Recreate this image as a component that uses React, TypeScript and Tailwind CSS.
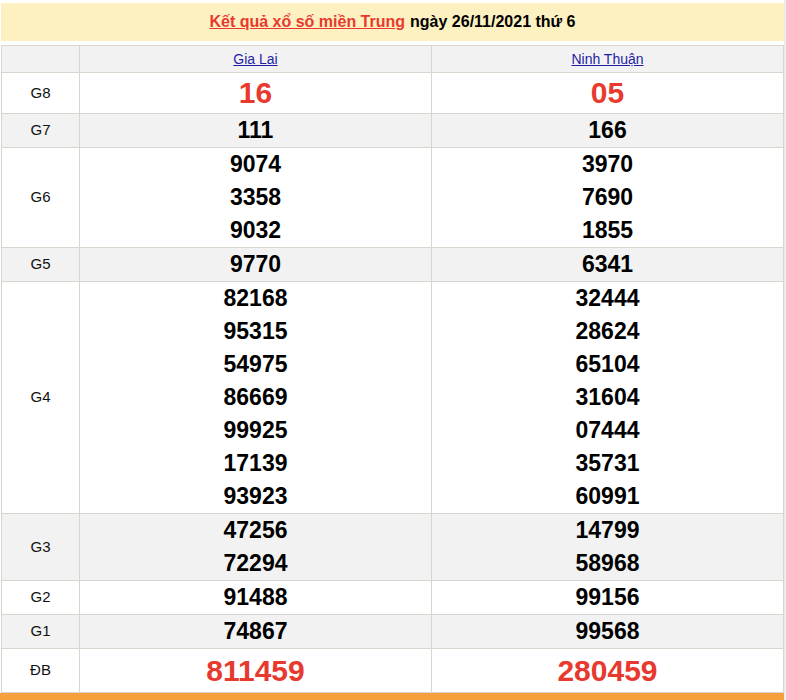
import * as React from 'react'

type Row = { label: string; a: string[]; b: string[]; big?: boolean; gray?: boolean; h?: string }

const rows: Row[] = [
  { label: 'G8', a: ['16'], b: ['05'], big: true, h: 'h-[41px]' },
  { label: 'G7', a: ['111'], b: ['166'], gray: true },
  { label: 'G6', a: ['9074', '3358', '9032'], b: ['3970', '7690', '1855'] },
  { label: 'G5', a: ['9770'], b: ['6341'], gray: true },
  {
    label: 'G4',
    a: ['82168', '95315', '54975', '86669', '99925', '17139', '93923'],
    b: ['32444', '28624', '65104', '31604', '07444', '35731', '60991'],
  },
  { label: 'G3', a: ['47256', '72294'], b: ['14799', '58968'], gray: true },
  { label: 'G2', a: ['91488'], b: ['99156'] },
  { label: 'G1', a: ['74867'], b: ['99568'], gray: true },
  { label: 'ĐB', a: ['811459'], b: ['280459'], big: true, h: 'h-[44px]' },
]

const Cell: React.FC<{ nums: string[]; big?: boolean; h?: string }> = ({ nums, big, h }) => (
  <td className={`border border-[#d9d5ce] p-0 text-center align-middle ${h ?? ''}`}>
    {nums.map((n) =>
      big ? (
        <div key={n} className="text-[30px] font-bold leading-[36px] text-[#e8392f]">
          {n}
        </div>
      ) : (
        <div key={n} className="text-[23px] font-bold leading-[33px] text-black">
          {n}
        </div>
      )
    )}
  </td>
)

const App: React.FC = () => {
  return (
    <div className="flex w-[786px] bg-white font-['Liberation_Sans',Arial,sans-serif]">
      <div className="w-[784px]">
        <div className="ml-px mt-[3px] flex h-[38px] w-[783px] items-center justify-center bg-[#fdf1c1] text-[16px] font-bold">
          <a href="#" className="text-[#e8392f] underline">
            Kết quả xổ số miền Trung
          </a>
          <span className="ml-[5px] text-black">ngày 26/11/2021 thứ 6</span>
        </div>
        <table className="ml-px mt-[4px] w-[783px] table-fixed border-collapse">
          <colgroup>
            <col className="w-[78px]" />
            <col className="w-[352px]" />
            <col className="w-[352px]" />
          </colgroup>
          <thead>
            <tr className="h-[27px] bg-[#f2f2f2]">
              <th className="border border-[#d9d5ce]" />
              <th className="border border-[#d9d5ce] text-[14px] font-normal">
                <a href="#" className="text-[#1f1fa6] underline">Gia Lai</a>
              </th>
              <th className="border border-[#d9d5ce] text-[14px] font-normal">
                <a href="#" className="text-[#1f1fa6] underline">Ninh Thuận</a>
              </th>
            </tr>
          </thead>
          <tbody>
            {rows.map((r) => (
              <tr key={r.label} className={r.gray ? 'bg-[#f2f2f2]' : 'bg-white'}>
                <td className="border border-[#d9d5ce] text-center text-[15px] text-[#111]">{r.label}</td>
                <Cell nums={r.a} big={r.big} h={r.h} />
                <Cell nums={r.b} big={r.big} h={r.h} />
              </tr>
            ))}
          </tbody>
        </table>
        <div className="h-[20px] w-[784px] bg-[#f5a03d]" />
      </div>
      <div className="w-[2px] self-stretch bg-[#ececec]" />
    </div>
  )
}

export default App
